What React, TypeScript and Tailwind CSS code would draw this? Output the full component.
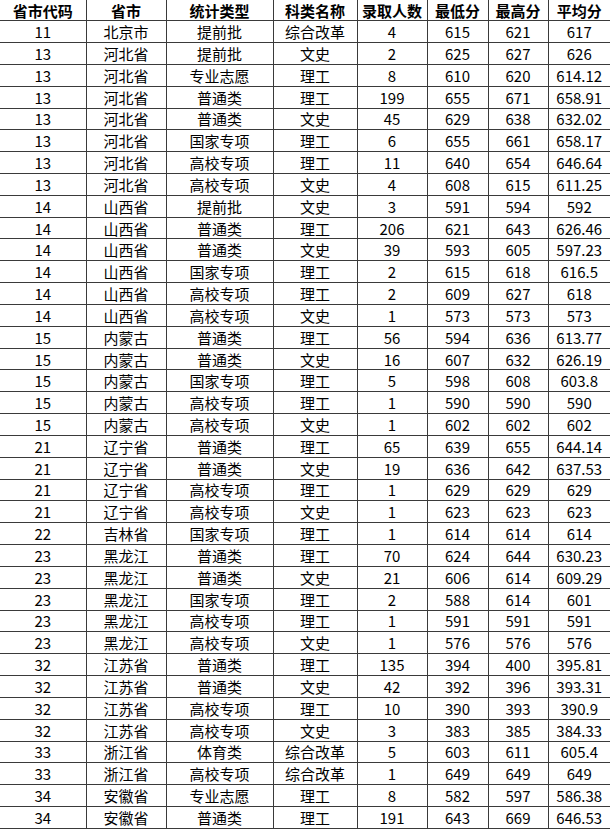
const headers = ["省市代码", "省市", "统计类型", "科类名称", "录取人数", "最低分", "最高分", "平均分"];

const rows: string[][] = [
  ["11", "北京市", "提前批", "综合改革", "4", "615", "621", "617"],
  ["13", "河北省", "提前批", "文史", "2", "625", "627", "626"],
  ["13", "河北省", "专业志愿", "理工", "8", "610", "620", "614.12"],
  ["13", "河北省", "普通类", "理工", "199", "655", "671", "658.91"],
  ["13", "河北省", "普通类", "文史", "45", "629", "638", "632.02"],
  ["13", "河北省", "国家专项", "理工", "6", "655", "661", "658.17"],
  ["13", "河北省", "高校专项", "理工", "11", "640", "654", "646.64"],
  ["13", "河北省", "高校专项", "文史", "4", "608", "615", "611.25"],
  ["14", "山西省", "提前批", "文史", "3", "591", "594", "592"],
  ["14", "山西省", "普通类", "理工", "206", "621", "643", "626.46"],
  ["14", "山西省", "普通类", "文史", "39", "593", "605", "597.23"],
  ["14", "山西省", "国家专项", "理工", "2", "615", "618", "616.5"],
  ["14", "山西省", "高校专项", "理工", "2", "609", "627", "618"],
  ["14", "山西省", "高校专项", "文史", "1", "573", "573", "573"],
  ["15", "内蒙古", "普通类", "理工", "56", "594", "636", "613.77"],
  ["15", "内蒙古", "普通类", "文史", "16", "607", "632", "626.19"],
  ["15", "内蒙古", "国家专项", "理工", "5", "598", "608", "603.8"],
  ["15", "内蒙古", "高校专项", "理工", "1", "590", "590", "590"],
  ["15", "内蒙古", "高校专项", "文史", "1", "602", "602", "602"],
  ["21", "辽宁省", "普通类", "理工", "65", "639", "655", "644.14"],
  ["21", "辽宁省", "普通类", "文史", "19", "636", "642", "637.53"],
  ["21", "辽宁省", "高校专项", "理工", "1", "629", "629", "629"],
  ["21", "辽宁省", "高校专项", "文史", "1", "623", "623", "623"],
  ["22", "吉林省", "国家专项", "理工", "1", "614", "614", "614"],
  ["23", "黑龙江", "普通类", "理工", "70", "624", "644", "630.23"],
  ["23", "黑龙江", "普通类", "文史", "21", "606", "614", "609.29"],
  ["23", "黑龙江", "国家专项", "理工", "2", "588", "614", "601"],
  ["23", "黑龙江", "高校专项", "理工", "1", "591", "591", "591"],
  ["23", "黑龙江", "高校专项", "文史", "1", "576", "576", "576"],
  ["32", "江苏省", "普通类", "理工", "135", "394", "400", "395.81"],
  ["32", "江苏省", "普通类", "文史", "42", "392", "396", "393.31"],
  ["32", "江苏省", "高校专项", "理工", "10", "390", "393", "390.9"],
  ["32", "江苏省", "高校专项", "文史", "3", "383", "385", "384.33"],
  ["33", "浙江省", "体育类", "综合改革", "5", "603", "611", "605.4"],
  ["33", "浙江省", "高校专项", "综合改革", "1", "649", "649", "649"],
  ["34", "安徽省", "专业志愿", "理工", "8", "582", "597", "586.38"],
  ["34", "安徽省", "普通类", "理工", "191", "643", "669", "646.53"],
];

// column widths read off the screenshot grid lines
const colClass = [
  "w-[86px]",
  "w-[80px]",
  "w-[107px]",
  "w-[84px]",
  "w-[70px]",
  "w-[61px]",
  "w-[60px]",
  "w-[62px]",
];

export default function App() {
  return (
    <div className="w-[610px] h-[831px] overflow-hidden bg-white text-black font-['Noto_Sans_CJK_SC',sans-serif]">
      <table className="w-[610px] table-fixed border-collapse text-[15px] leading-none">
        <colgroup>
          {colClass.map((c, i) => (
            <col key={i} className={c} />
          ))}
        </colgroup>
        <thead>
          <tr className="h-[20.7px]">
            {headers.map((h, i) => (
              <th
                key={h}
                className={
                  "border-b border-[#3a3a3a] font-bold text-center p-0 " +
                  (i < 7 ? "border-r" : "")
                }
              >
                {h}
              </th>
            ))}
          </tr>
        </thead>
        <tbody>
          {rows.map((r, ri) => (
            <tr key={ri} className="h-[21.84px]">
              {r.map((cell, ci) => (
                <td
                  key={ci}
                  className={
                    "border-b border-[#3a3a3a] text-center p-0 " +
                    (ci < 7 ? "border-r" : "")
                  }
                >
                  {cell}
                </td>
              ))}
            </tr>
          ))}
        </tbody>
      </table>
    </div>
  );
}
